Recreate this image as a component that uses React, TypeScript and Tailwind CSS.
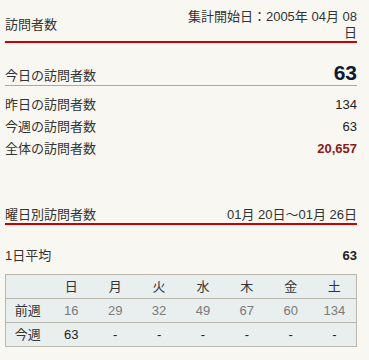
const days = ['日', '月', '火', '水', '木', '金', '土']
const lastWeek = ['16', '29', '32', '49', '67', '60', '134']
const thisWeek = ['63', '-', '-', '-', '-', '-', '-']

const font = "font-['Liberation_Sans','Noto_Sans_CJK_JP',sans-serif]"

export default function App() {
  return (
    <div className={`min-h-[360px] w-[369px] bg-[#f8f7f1] px-[5px] pr-[12px] text-[13px] text-[#333] ${font}`}>
      {/* 訪問者数 */}
      <div className="flex items-center justify-between border-b-2 border-[#cc0000] pt-[9px] leading-[16px]">
        <span>訪問者数</span>
        <span className="text-right">
          集計開始日：2005年 04月 08
          <br />日
        </span>
      </div>

      <div className="mt-[17px] flex h-[26px] items-baseline justify-between border-b border-[#aaa9a2] leading-[26px]">
        <span>今日の訪問者数</span>
        <span className="text-[21px] font-bold text-[#0d1a33]">63</span>
      </div>

      <div className="pt-[8px]">
        <div className="flex h-[22px] items-center justify-between">
          <span>昨日の訪問者数</span>
          <span className="text-[#222]">134</span>
        </div>
        <div className="flex h-[22px] items-center justify-between">
          <span>今週の訪問者数</span>
          <span className="text-[#222]">63</span>
        </div>
        <div className="flex h-[22px] items-center justify-between">
          <span>全体の訪問者数</span>
          <span className="font-bold text-[#8b1a1a]">20,657</span>
        </div>
      </div>

      {/* 曜日別訪問者数 */}
      <div className="mt-[47px] flex items-center justify-between border-b-2 border-[#cc0000] leading-[16px]">
        <span>曜日別訪問者数</span>
        <span>01月 20日〜01月 26日</span>
      </div>

      <div className="mt-[23px] flex h-[16px] items-center justify-between leading-[16px]">
        <span>1日平均</span>
        <span className="font-bold text-[#222]">63</span>
      </div>

      <table className="mt-[10px] w-full table-fixed border-collapse border border-[#b9b7ac] bg-[#e9eeee] text-center">
        <thead>
          <tr className="h-[24px] border-b border-[#b9b7ac]">
            <th className="font-normal" />
            {days.map((d) => (
              <th key={d} className="font-normal text-[#333]">
                {d}
              </th>
            ))}
          </tr>
        </thead>
        <tbody>
          <tr className="h-[24px] border-b border-[#b9b7ac]">
            <td className="text-[#333]">前週</td>
            {lastWeek.map((v, i) => (
              <td key={i} className="text-[#7a7a7a]">
                {v}
              </td>
            ))}
          </tr>
          <tr className="h-[24px]">
            <td className="text-[#333]">今週</td>
            {thisWeek.map((v, i) => (
              <td key={i} className="text-[#222]">
                {v}
              </td>
            ))}
          </tr>
        </tbody>
      </table>
    </div>
  )
}
